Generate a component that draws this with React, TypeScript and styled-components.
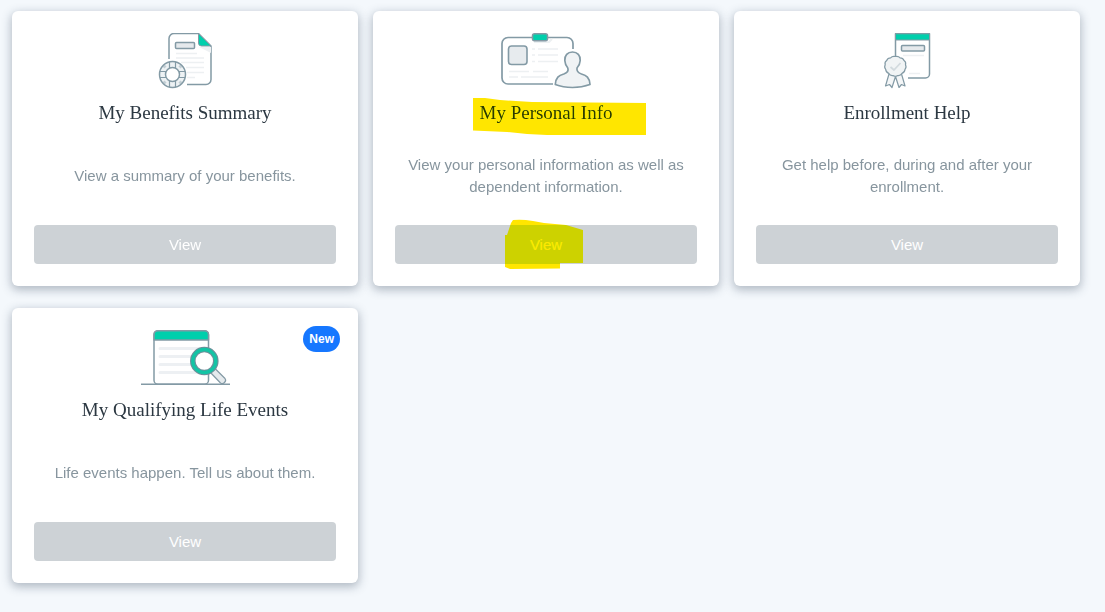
import React from "react";
import styled, { createGlobalStyle } from "styled-components";

const GlobalStyle = createGlobalStyle`
  *, *::before, *::after { box-sizing: border-box; }
  body {
    margin: 0;
    background: #f4f8fc;
    font-family: "Liberation Sans", Arial, sans-serif;
  }
`;

const Grid = styled.main`
  display: grid;
  grid-template-columns: repeat(3, minmax(0, 1fr));
  gap: 22px 15px;
  padding: 11px 25px 29px 12px;
`;

const CardBox = styled.article`
  position: relative;
  display: flex;
  flex-direction: column;
  align-items: center;
  min-height: 275px;
  padding: 22px;
  border-radius: 6px;
  background: #fff;
  box-shadow: 0 3px 10px 1px rgba(50, 68, 90, 0.34);
`;

const Title = styled.h2`
  position: relative;
  margin: 11px 0 0;
  font-family: "Liberation Serif", "Times New Roman", serif;
  font-size: 19px;
  font-weight: 400;
  line-height: 26px;
  color: #2c3842;
  text-align: center;
`;

const Description = styled.p`
  display: flex;
  flex: 1;
  align-items: center;
  margin: 0;
  padding: 0 12px;
  font-size: 15px;
  line-height: 22px;
  color: #87959e;
  text-align: center;
`;

const ViewButton = styled.button`
  position: relative;
  width: 100%;
  height: 39px;
  padding: 0;
  border: 0;
  border-radius: 4px;
  background: #cdd2d6;
  color: #fff;
  font: 15px/22px "Liberation Sans", Arial, sans-serif;
  cursor: pointer;
`;

const Badge = styled.span`
  position: absolute;
  top: 18px;
  right: 18px;
  padding: 0 6px;
  border-radius: 13px;
  background: #1677ff;
  color: #fff;
  font-size: 12px;
  font-weight: 700;
  line-height: 26px;
`;

const Marker = styled.svg<{ $top: number; $left: string }>`
  position: absolute;
  top: ${(p) => p.$top}px;
  left: ${(p) => p.$left};
  fill: #ffe600;
  mix-blend-mode: darken;
  pointer-events: none;
`;

const Art = styled.svg`
  display: block;
  flex: none;
  height: 56px;
  fill: none;
  stroke: #839aa5;
  stroke-width: 1.5;
  stroke-linejoin: round;
`;

const SummaryIcon = () => (
  <Art width="80" viewBox="0 8 80 56" aria-hidden="true">
    <path d="M24 34V13.500a5 5 0 0 1 5-5h24.500L66 21v33.500a5 5 0 0 1-5 5H42" fill="#fff" />
    <path d="M54 22h12v6z" fill="#eef1f3" stroke="none" />
    <path d="M53.500 8.500V18q0 3 3 3H66z" fill="#00cfac" strokeWidth="1" />
    <rect x="30.500" y="17.500" width="19" height="6" rx="1" fill="#e5e9ec" />
    <path d="M31 28.500h21M31 33h28M36 37.500h23M41 42.500h18M42 47.500h17M42 52.500h8" stroke="#edf0f2" />
    <circle cx="27.500" cy="49.500" r="10" stroke="#eef2f4" strokeWidth="6" />
    <path d="M20.500 42.500l-2-2M34.500 42.500l2-2M20.500 56.500l-2 2M34.500 56.500l2 2" stroke="#c3cfd5" strokeWidth="3" />
    <circle cx="27.500" cy="49.500" r="13" />
    <circle cx="27.500" cy="49.500" r="7" fill="#fff" />
    <path d="M24.500 37v6M30.500 37v6M24.500 56v6M30.500 56v6M15 46.500h6M15 52.500h6M34 46.500h6M34 52.500h6" strokeWidth="1.200" />
  </Art>
);

const PersonalIcon = () => (
  <Art width="110" viewBox="1 8 110 56" aria-hidden="true">
    <path d="M83 24v-5.500a6 6 0 0 0-6-6H18a6 6 0 0 0-6 6V53a6 6 0 0 0 6 6h45" fill="#fff" strokeWidth="1.700" />
    <path d="M44 17h15l3-3" stroke="#edf0f2" strokeWidth="2" />
    <rect x="42.500" y="8.800" width="15" height="7" rx="2" fill="#00cfac" />
    <rect x="18.500" y="21" width="18.500" height="18.500" rx="3" fill="#e7ebee" strokeWidth="1.600" />
    <path d="M42 24h3M48 24h20M42 30h3M48 30h20M42 36.500h3M48 36.500h20M19 46.500h20M43 46.500h15M19 52h9M31 52h27" stroke="#edf0f2" />
    <path d="M82.500 27c-5 0-8 3.500-7.700 8.500.2 3 1.200 5.500 3 7.500 1 3-1 5-4 6-5 1.500-8 3.500-8.500 10.500Q73 62.500 82.500 62.500T100 59.500c-.5-7-3.500-9-8.500-10.500-3-1-5-3-4.500-6 2-2 3-4.500 3.200-7.500.3-5-2.700-8.500-7.700-8.500z" fill="#f0f3f5" strokeWidth="1.700" />
  </Art>
);

const HelpIcon = () => (
  <Art width="70" viewBox="1 8 70 56" aria-hidden="true">
    <path d="M24.500 31V8.800h34V49a4 4 0 0 1-4 4H37" fill="#fff" />
    <path d="M24.500 8.800h34V15h-34z" fill="#00cfac" strokeWidth="1" />
    <rect x="30.500" y="20.500" width="23" height="5.500" rx="1" fill="#e5e9ec" />
    <path d="M32 30.500h21M38 48.500h11" stroke="#edf0f2" />
    <path d="M18 49l-3.500 12 4-1.500 2.500 3 3.500-11 3.500 11 2.500-3 3.500 1.500L30.500 49" fill="#f4f6f7" strokeWidth="1.200" />
    <path d="M24.300 31.500q3-.8 4.800 1.300 2.900 0 3.900 2.700 2.300 1.500 1.500 4.300 1.300 2.500-.5 4.600-.2 3-3 4-1.500 2.400-4.200 2.100-2.500 1.500-4.800 0-2.900.4-4.300-2.100-2.800-1-3-4-1.800-2.100-.5-4.600-.8-2.800 1.500-4.300 1-2.700 3.900-2.700 1.700-2.100 4.700-1.300z" fill="#f1f4f5" strokeWidth="1.200" />
    <path d="M19.500 42l3.500 3 6.500-7" stroke="#d2dade" strokeWidth="1.800" />
  </Art>
);

const EventsIcon = () => (
  <Art width="110" viewBox="0 10 110 56" aria-hidden="true">
    <rect x="24" y="10.700" width="54.500" height="53.500" rx="4" fill="#fff" />
    <path d="M24 20v-5.300a4 4 0 0 1 4-4h46.500a4 4 0 0 1 4 4V20z" fill="#00cfac" />
    <path d="M30 28.500h44M30 36.500h32M30 44.500h32M30 52.500h44" stroke="#edf0f3" strokeWidth="3" strokeLinecap="round" />
    <path d="M11 64.300h89" />
    <path d="M80 52l10.500 11q2 1.500 4-.5t.5-4L84.500 48z" fill="#e5eaed" strokeWidth="1.200" />
    <circle cx="74.300" cy="41" r="11.500" fill="#fff" stroke="#6f8f9a" strokeWidth="5.600" />
    <circle cx="74.300" cy="41" r="11.500" stroke="#14c4a5" strokeWidth="3.400" />
  </Art>
);

interface CardProps {
  icon: React.ReactNode;
  title: string;
  text: string;
  badge?: string;
  marked?: boolean;
}

const Card = ({ icon, title, text, badge, marked }: CardProps) => (
  <CardBox>
    {icon}
    {badge && <Badge>{badge}</Badge>}
    <Title>
      {title}
      {marked && (
        <Marker $top={-3} $left="calc(50% - 74px)" width="175" height="38" aria-hidden="true">
          <path d="M1 1H13L28 3L60 5L174 6V38H75L55 37L35 35L1 33.500Z" />
        </Marker>
      )}
    </Title>
    <Description>{text}</Description>
    <ViewButton type="button" aria-label={`View: ${title}`}>
      View
      {marked && (
        <Marker $top={-6} $left="calc(50% - 42px)" width="80" height="50" aria-hidden="true">
          <path d="M9 1Q18 0 29 2L40 4L62 6L79 11V44H56V49.500L6 50L1 48V16H3L7 4Z" />
        </Marker>
      )}
    </ViewButton>
  </CardBox>
);

export default function App() {
  return (
    <>
      <GlobalStyle />
      <Grid>
        <Card icon={<SummaryIcon />} title="My Benefits Summary" text="View a summary of your benefits." />
        <Card
          icon={<PersonalIcon />}
          title="My Personal Info"
          text="View your personal information as well as dependent information."
          marked
        />
        <Card
          icon={<HelpIcon />}
          title="Enrollment Help"
          text="Get help before, during and after your enrollment."
        />
        <Card
          icon={<EventsIcon />}
          title="My Qualifying Life Events"
          text="Life events happen. Tell us about them."
          badge="New"
        />
      </Grid>
    </>
  );
}
